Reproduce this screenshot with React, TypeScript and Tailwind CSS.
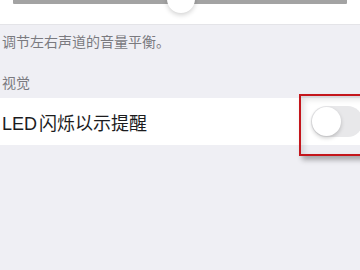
export default function App() {
  return (
    <div
      className="relative w-[360px] h-[270px] overflow-hidden bg-[#efeff4]"
      style={{ fontFamily: '"Liberation Sans", "Noto Sans CJK SC", sans-serif' }}
    >
      {/* slider section */}
      <div className="relative h-[25px] bg-white border-b border-[#e4e4e8]">
        <div className="mx-[13px] h-[4px] bg-[#a3a3a3] rounded-b-[1px]" />
        <div className="absolute left-[167px] top-[-15px] w-[28px] h-[28px] rounded-full bg-white shadow-[0_2px_5px_rgba(0,0,0,0.18)]" />
      </div>

      <p className="pl-[2px] pt-[9px] text-[14px] leading-[16px] text-[#7a7a7f]">调节左右声道的音量平衡。</p>
      <p className="pl-[2px] mt-[25px] text-[14px] leading-[16px] text-[#7a7a7f]">视觉</p>

      <div className="mt-[7px] h-[47px] bg-white flex items-center">
        <span className="pl-[2px] pt-[4px] text-[18px] leading-[20px] text-[#1c1c1e]">
          LED<span className="ml-[2px]">闪烁以示提醒</span>
        </span>
        <div className="ml-auto mr-[-3px] w-[52px] h-[31px] rounded-full bg-[#e8e8ea] flex items-center pl-[1px] blur-[0.5px]">
          <div className="w-[29px] h-[29px] rounded-full bg-white shadow-[0_2px_4px_rgba(0,0,0,0.2)]" />
        </div>
      </div>

      {/* annotation box */}
      <div className="absolute left-[299px] top-[94px] w-[70px] h-[62px] border-2 border-[#c4161c] shadow-[3px_4px_5px_rgba(0,0,0,0.3),inset_3px_3px_6px_rgba(0,0,0,0.12)]" />
    </div>
  );
}
